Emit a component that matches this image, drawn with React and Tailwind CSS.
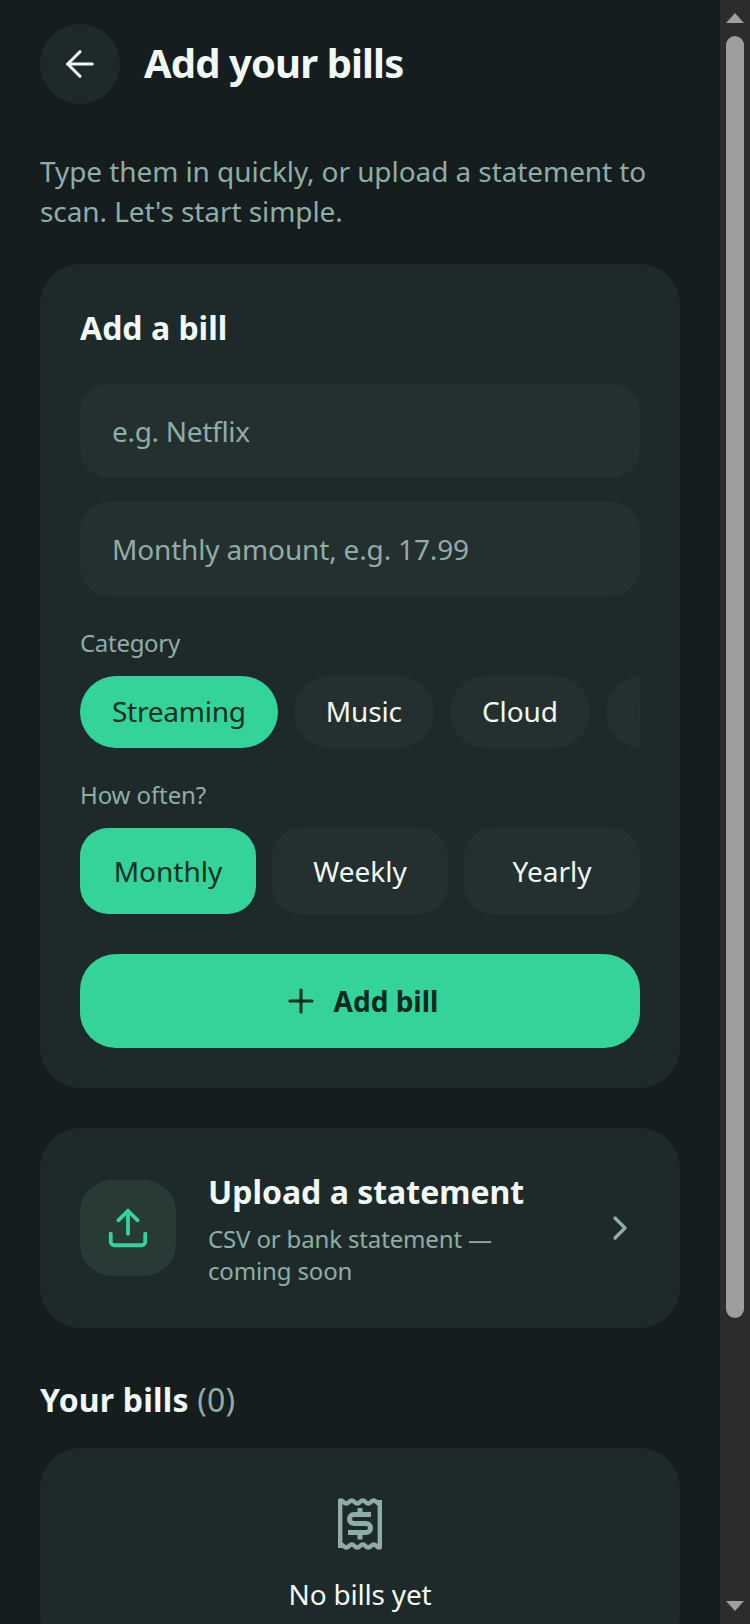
import React from 'react';
import { ArrowLeft, ChevronRight, Plus, Upload } from 'lucide-react';

const categories = ['Streaming', 'Music', 'Cloud', 'Fitness'];
const frequencies = ['Monthly', 'Weekly', 'Yearly'];

const ReceiptIcon = () => (
  <svg width="44" height="52" viewBox="0 0 44 52" fill="none" stroke="#8fada7">
    <path d="M2.2 2v48M41.8 2v48" strokeWidth="4.4" />
    <path d="M0 4q2.75-3 5.5 0t5.5 0 5.5 0 5.5 0 5.5 0 5.5 0 5.5 0 5.5 0" strokeWidth="4.4" />
    <path d="M0 48q2.75-3 5.5 0t5.5 0 5.5 0 5.5 0 5.5 0 5.5 0 5.5 0 5.5 0" strokeWidth="4.4" />
    <path d="M33 16.5H16a4.5 4.5 0 0 0 0 9h12a4.5 4.5 0 0 1 0 9H10" strokeWidth="5" />
    <path d="M22 10v7M22 34v7.5" strokeWidth="5" />
  </svg>
);

export default function App() {
  return (
    <div className="flex h-[1624px] w-[750px] overflow-hidden bg-[#151d1f] font-['Noto_Sans',sans-serif]">
      <main className="w-[720px] shrink-0 px-10 pt-6">
        <header className="flex items-center gap-6">
          <button className="flex h-20 w-20 items-center justify-center rounded-full bg-[#1e2a2a] text-[#f1f8f6]">
            <ArrowLeft size={42} strokeWidth={1.8} />
          </button>
          <h1 className="-mt-0.5 text-[40px] leading-[52px] font-bold tracking-[-0.9px] text-[#f1f8f6]">Add your bills</h1>
        </header>

        <p className="mt-[47px] text-[28px] leading-10 tracking-[-0.08px] text-[#8fada7]">
          Type them in quickly, or upload a statement to scan. Let's start simple.
        </p>

        <section className="mt-[33px] rounded-[40px] bg-[#1e2a2a] p-10">
          <h2 className="text-[32px] leading-12 font-bold text-[#f1f8f6]">Add a bill</h2>

          <div className="mt-8 flex h-[94px] items-center rounded-[28px] bg-[#242f2f] px-8 text-[28px] tracking-[-0.3px] text-[#8fada7]">
            e.g. Netflix
          </div>
          <div className="mt-6 flex h-[94px] items-center rounded-[28px] bg-[#242f2f] px-8 text-[28px] tracking-[-0.16px] text-[#8fada7]">
            Monthly amount, e.g. 17.99
          </div>

          <div className="mt-[31px] text-[24px] leading-8 tracking-[-0.3px] text-[#8fada7]">Category</div>
          <div className="mt-[17px] flex gap-4 overflow-hidden">
            {categories.map((c, i) => (
              <span
                key={c}
                className={`flex h-[72px] shrink-0 items-center rounded-full px-8 pb-0.5 text-[28px] ${
                  i === 0 ? 'bg-[#34d399] tracking-[-0.25px] text-[#0c2e24]' : 'bg-[#242f2f] tracking-[-0.1px] text-[#f1f8f6]'
                }`}
              >
                {c}
              </span>
            ))}
          </div>

          <div className="mt-[31px] text-[24px] leading-8 tracking-[-0.1px] text-[#8fada7]">How often?</div>
          <div className="mt-[17px] grid grid-cols-3 gap-4">
            {frequencies.map((f, i) => (
              <span
                key={f}
                className={`flex h-[86px] items-center justify-center rounded-[28px] text-[28px] ${
                  i === 0 ? 'bg-[#34d399] text-[#0c2e24]' : 'bg-[#242f2f] text-[#f1f8f6]'
                }`}
              >
                {f}
              </span>
            ))}
          </div>

          <button className="mt-10 flex h-[94px] w-full items-center justify-center gap-[14px] rounded-[36px] bg-[#34d399] text-[28px] font-bold text-[#0a2a20]">
            <Plus size={38} strokeWidth={1.9} />
            Add bill
          </button>
        </section>

        <section className="mt-10 flex h-[200px] items-center rounded-[40px] bg-[#1e2a2a] px-10">
          <div className="flex h-24 w-24 shrink-0 items-center justify-center rounded-[32px] bg-[#283a36] text-[#34d399]">
            <Upload size={46} strokeWidth={2} />
          </div>
          <div className="ml-8 w-[320px] pt-[3px]">
            <h3 className="whitespace-nowrap text-[32px] leading-10 font-bold text-[#f1f8f6]">Upload a statement</h3>
            <p className="mt-[11px] text-[24px] leading-8 tracking-[-0.15px] text-[#8fada7]">CSV or bank statement — coming soon</p>
          </div>
          <ChevronRight className="ml-auto text-[#8fada7]" size={40} strokeWidth={2} />
        </section>

        <h2 className="mt-12 text-[32px] leading-12 font-bold tracking-[0.2px] text-[#f1f8f6]">
          Your bills <span className="font-normal text-[#8fada7]">(0)</span>
        </h2>

        <section className="mt-6 flex flex-col items-center rounded-[40px] bg-[#1e2a2a] pt-[50px] pb-10">
          <ReceiptIcon />
          <p className="mt-6 text-[28px] leading-10 tracking-[-0.2px] text-[#f1f8f6]">No bills yet</p>
        </section>
      </main>

      {/* scrollbar as photographed */}
      <aside className="flex w-[30px] shrink-0 flex-col items-center bg-[#2c2c2c] pt-[13px]">
        <svg width="18" height="10" viewBox="0 0 18 10"><path d="M9 0l9 10H0z" fill="#9e9e9e" /></svg>
        <div className="mt-[13px] h-[1282px] w-[18px] rounded-full bg-[#9e9e9e]" />
        <svg className="mt-auto mb-[13px]" width="18" height="10" viewBox="0 0 18 10"><path d="M0 0h18L9 10z" fill="#9e9e9e" /></svg>
      </aside>
    </div>
  );
}
